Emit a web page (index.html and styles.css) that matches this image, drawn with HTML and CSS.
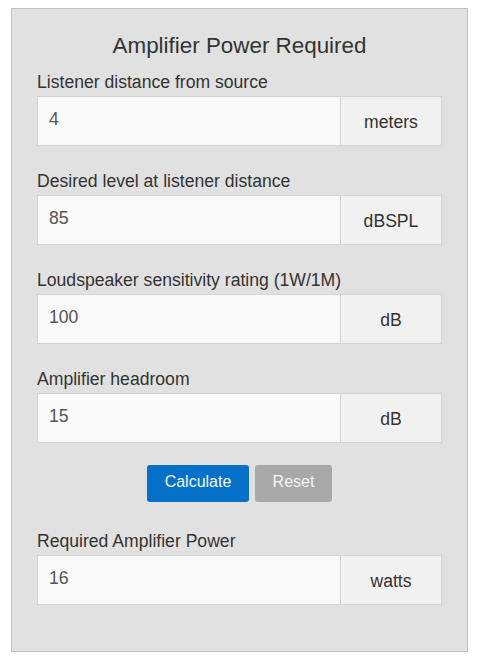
FILE: index.html
```html
<!DOCTYPE html>
<html>
<head>
<meta charset="utf-8">
<link rel="stylesheet" href="styles.css">
</head>
<body>
<div class="panel">
  <h1 class="title">Amplifier Power Required</h1>
  <div class="field">
    <label class="label">Listener distance from source</label>
    <div class="group"><div class="input">4</div><div class="addon">meters</div></div>
  </div>
  <div class="field">
    <label class="label">Desired level at listener distance</label>
    <div class="group"><div class="input">85</div><div class="addon">dBSPL</div></div>
  </div>
  <div class="field">
    <label class="label">Loudspeaker sensitivity rating (1W/1M)</label>
    <div class="group"><div class="input">100</div><div class="addon">dB</div></div>
  </div>
  <div class="field">
    <label class="label">Amplifier headroom</label>
    <div class="group"><div class="input">15</div><div class="addon">dB</div></div>
  </div>
  <div class="buttons">
    <button class="btn btn-primary">Calculate</button>
    <button class="btn btn-reset">Reset</button>
  </div>
  <div class="field result">
    <label class="label">Required Amplifier Power</label>
    <div class="group"><div class="input">16</div><div class="addon">watts</div></div>
  </div>
</div>
</body>
</html>
```
FILE: styles.css
```css
html, body { margin: 0; padding: 0; background: #fff; }
body { padding: 8px 11px; font-family: "Liberation Sans", Arial, sans-serif; color: #333; }
.panel {
  width: 457px;
  height: 644px;
  box-sizing: border-box;
  background: #e1e1e1;
  border: 1px solid #c2c2c2;
  padding: 22px 25px 0 25px;
}
.title {
  margin: 0 0 11px 0;
  font-size: 22.4px;
  font-weight: normal;
  line-height: 30px;
  text-align: center;
  color: #333;
}
.field { display: flex; flex-direction: column; margin-bottom: 25px; }
.label { display: block; font-size: 17.6px; line-height: 20px; padding-top: 0; margin-bottom: 4px; color: #333; }
.group { display: flex; height: 50px; box-sizing: border-box; border: 1px solid #d3d3d3; }
.input {
  flex: 1;
  background: #f9f9f9;
  font-size: 17.6px;
  line-height: 20px;
  color: #555;
  padding: 12px 12px 0 11px;
  box-sizing: border-box;
}
.addon {
  width: 101px;
  background: #f1f1f1;
  border-left: 1px solid #d3d3d3;
  font-size: 17.6px;
  color: #333;
  display: flex;
  align-items: center;
  justify-content: center;
  padding-top: 2px;
  box-sizing: border-box;
}
.buttons { display: flex; justify-content: center; gap: 6px; margin-top: -3px; margin-bottom: 29px; }
.btn {
  height: 37px;
  border: none;
  border-radius: 3px;
  font-family: "Liberation Sans", Arial, sans-serif;
  font-size: 16px;
  color: #fff;
  padding: 0 0 3px 0;
  line-height: 34px;
}
.btn-primary { background: #0570c8; width: 102px; color: #f4faff; }
.btn-reset { background: #a8a8a8; width: 77px; color: #f4f4f4; }
.result { margin-bottom: 0; }
```
